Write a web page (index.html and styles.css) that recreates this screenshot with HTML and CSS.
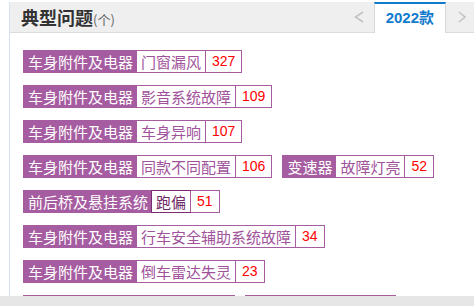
FILE: index.html
```html
<!DOCTYPE html>
<html>
<head>
    <meta charset="utf-8">
    <title>典型问题</title>
    <link rel="stylesheet" href="styles.css">
</head>
<body>
    <div class="panel">
        <div class="head">
            <h3 class="title">典型问题<span class="unit">(个)</span></h3>
            <div class="years">
                <span class="arrow">
                    <svg width="10" height="12" viewBox="0 0 10 12"><polyline points="9,1 1.5,6 9,11" fill="none" stroke="#c2c2c2" stroke-width="1.6"/></svg>
                </span>
                <span class="year-tab">2022款</span>
                <span class="arrow next">
                    <svg width="8" height="12" viewBox="0 0 8 12"><polyline points="1,1 7,6 1,11" fill="none" stroke="#c2c2c2" stroke-width="1.6"/></svg>
                </span>
            </div>
        </div>

        <div class="tags">
            <a class="tag"><span class="cat">车身附件及电器</span><span class="name">门窗漏风</span><span class="num">327</span></a>
            <a class="tag"><span class="cat">车身附件及电器</span><span class="name">影音系统故障</span><span class="num">109</span></a>
            <a class="tag"><span class="cat">车身附件及电器</span><span class="name">车身异响</span><span class="num">107</span></a>
            <a class="tag"><span class="cat">车身附件及电器</span><span class="name">同款不同配置</span><span class="num">106</span></a>
            <a class="tag"><span class="cat">变速器</span><span class="name">故障灯亮</span><span class="num">52</span></a>
            <a class="tag"><span class="cat">前后桥及悬挂系统</span><span class="name active">跑偏</span><span class="num">51</span></a>
            <a class="tag"><span class="cat">车身附件及电器</span><span class="name">行车安全辅助系统故障</span><span class="num">34</span></a>
            <a class="tag"><span class="cat">车身附件及电器</span><span class="name">倒车雷达失灵</span><span class="num">23</span></a>
            <a class="tag"><span class="cat">车身附件及电器</span><span class="name">空调异味</span><span class="num">21</span></a>
            <a class="tag"><span class="cat">变速器</span><span class="name">换挡顿挫</span><span class="num">18</span></a>
        </div>
    </div>
    <div class="scrollbar"></div>
</body>
</html>
```

FILE: styles.css
```css
body {
    margin: 0;
    font-family: "Noto Sans CJK SC", "Liberation Sans", sans-serif;
    background: #fff;
}
.panel {
    height: 294px;
    margin: 2px 0 0 9px;
    border-left: 1px solid #d2e1f3;
    overflow: hidden;
}
.head {
    display: flex;
    justify-content: space-between;
    height: 30px;
    background: #efefef;
    border-bottom: 1px solid #dcdcdc;
}
.title {
    margin: 0;
    padding-left: 11px;
    font-size: 18px;
    font-weight: bold;
    line-height: 30px;
    color: #333;
}
.unit {
    font-size: 13px;
    font-weight: normal;
    color: #666;
}
.years {
    display: flex;
    align-items: flex-start;
    margin-right: 8px;
}
.arrow {
    display: flex;
    align-items: center;
    height: 30px;
    margin-right: 10px;
}
.arrow.next {
    margin: 0 0 0 12px;
}
.year-tab {
    box-sizing: border-box;
    height: 31px;
    padding: 0 11px;
    border-top: 2px solid #137bcc;
    border-left: 1px solid #d6d6d6;
    border-right: 1px solid #d6d6d6;
    background: #fff;
    font-family: "Liberation Sans", "Noto Sans CJK SC", sans-serif;
    font-size: 15px;
    font-weight: bold;
    line-height: 28px;
    color: #137bcc;
}
.tags {
    display: flex;
    flex-wrap: wrap;
    align-content: flex-start;
    gap: 12px 10px;
    padding: 17px 10px 0 13px;
}
.tag {
    display: inline-flex;
    border: 1px solid #a65ca0;
    font-size: 15px;
    line-height: 21px;
    text-decoration: none;
}
.cat {
    padding: 0 4px;
    background: #a65ca0;
    color: #fff;
}
.name {
    padding: 0 4px;
    color: #a0539a;
}
.name.active {
    outline: 1px solid #7b2c71;
    color: #6e2865;
}
.num {
    padding: 0 6px;
    border-left: 1px solid #a65ca0;
    font-family: "Liberation Sans", sans-serif;
    font-size: 14px;
    color: #f00;
}
.scrollbar {
    height: 10px;
    background: #e6e6e6;
}
```
